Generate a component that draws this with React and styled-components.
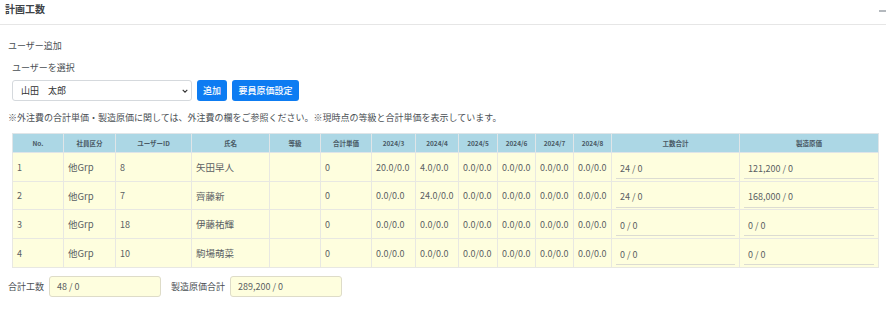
import React from "react";
import styled, { createGlobalStyle } from "styled-components";

const Global = createGlobalStyle`
  html, body { margin: 0; padding: 0; background: #fff; }
  body { font-family: "Noto Sans CJK JP", "Noto Sans", sans-serif; color: #495057; }
  * { box-sizing: border-box; }
`;

const Card = styled.div`
  width: 886px;
  height: 311px;
  background: #fff;
`;

const CardHeader = styled.div`
  display: flex;
  align-items: center;
  justify-content: space-between;
  height: 25px;
  padding: 0 0 0 5px;
  border-bottom: 1px solid #e6e6e6;
`;

const Title = styled.h3`
  margin: 0;
  font-size: 10px;
  font-weight: 700;
  color: #3d4246;
  line-height: 1;
  margin-top: -6px;
`;

const Collapse = styled.span`
  width: 7px;
  height: 2px;
  background: #b4b9be;
  margin-top: -2px;
`;

const Body = styled.div`
  padding: 14px 8px 0 8px;
`;

const Label = styled.div`
  font-size: 9px;
  line-height: 14px;
  color: #4a4f54;
  padding-left: ${(p) => p.$indent || 0}px;
  margin-bottom: ${(p) => p.$mb || 0}px;
`;

const Row = styled.div`
  display: flex;
  align-items: center;
  gap: 5px;
  padding-left: 4px;
`;

const Select = styled.div`
  width: 180px;
  height: 21px;
  border: 1px solid #d5d9dd;
  border-radius: 3px;
  display: flex;
  align-items: center;
  justify-content: space-between;
  padding: 0 3px 0 8px;
  font-size: 9px;
  color: #333;
  background: #fff;
`;

const Button = styled.button`
  height: 21px;
  padding: 0 ${(p) => p.$px || 5}px;
  border: none;
  border-radius: 3px;
  background: #0d7cf2;
  color: #fff;
  font-family: inherit;
  font-size: 9px;
  font-weight: 500;
  line-height: 1;
`;

const Note = styled.p`
  margin: 10px 0 0 0;
  font-size: 9px;
  line-height: 14px;
  color: #4a4f54;
`;

const TableWrap = styled.div`
  margin: 8px 0 0 4px;
`;

const Table = styled.table`
  width: 866px;
  table-layout: fixed;
  border-collapse: collapse;
  font-size: 9px;
`;

const Th = styled.th`
  background: #acd7e5;
  height: 19px;
  font-size: 6.5px;
  font-weight: 700;
  color: #4a5a66;
  text-align: center;
  border: 1px solid #dfe5e8;
  padding: 0;
`;

const Td = styled.td`
  background: #fefede;
  height: ${(p) => p.$h || 29}px;
  border: 1px solid #e8e8e2;
  padding: 0 4px;
  color: #5a5e63;
  font-size: ${(p) => (p.$big ? 9.5 : 9)}px;
  white-space: nowrap;
`;

const CellInput = styled.div`
  height: 21px;
  margin-top: 3px;
  display: flex;
  align-items: center;
  padding-left: 4px;
  border-bottom: 1px solid #dcdcd2;
  font-size: 9px;
  color: #5a5e63;
`;

const Summary = styled.div`
  display: flex;
  align-items: center;
  margin-top: 8px;
  font-size: 9px;
  color: #4a4f54;
`;

const SumLabel = styled.span`
  margin-right: 5px;
  margin-left: ${(p) => p.$ml || 0}px;
`;

const SumBox = styled.div`
  width: 112px;
  height: 21px;
  border: 1px solid #dedcc8;
  border-radius: 3px;
  background: #fefede;
  display: flex;
  align-items: center;
  padding-left: 7px;
  font-size: 9px;
  color: #5a5e63;
`;

const widths = [51, 52, 76, 78, 51, 51, 44, 43, 39, 38, 38, 38, 128, 139];
const headers = ["No.", "社員区分", "ユーザーID", "氏名", "等級", "合計単価", "2024/3", "2024/4", "2024/5", "2024/6", "2024/7", "2024/8", "工数合計", "製造原価"];

const rows = [
  { no: 1, id: 8, name: "矢田早人", m: ["20.0/0.0", "4.0/0.0", "0.0/0.0", "0.0/0.0", "0.0/0.0", "0.0/0.0"], t: "24 / 0", c: "121,200 / 0", h: 29 },
  { no: 2, id: 7, name: "齊藤新", m: ["0.0/0.0", "24.0/0.0", "0.0/0.0", "0.0/0.0", "0.0/0.0", "0.0/0.0"], t: "24 / 0", c: "168,000 / 0", h: 28 },
  { no: 3, id: 18, name: "伊藤祐輝", m: ["0.0/0.0", "0.0/0.0", "0.0/0.0", "0.0/0.0", "0.0/0.0", "0.0/0.0"], t: "0 / 0", c: "0 / 0", h: 29 },
  { no: 4, id: 10, name: "駒場萌菜", m: ["0.0/0.0", "0.0/0.0", "0.0/0.0", "0.0/0.0", "0.0/0.0", "0.0/0.0"], t: "0 / 0", c: "0 / 0", h: 29 },
];

const Chevron = () => (
  <svg width="6" height="4" viewBox="0 0 6 4">
    <path d="M0.7 0.8 L3 3.1 L5.3 0.8" fill="none" stroke="#333" strokeWidth="1.1" />
  </svg>
);

export default function App() {
  return (
    <Card>
      <Global />
      <CardHeader>
        <Title>計画工数</Title>
        <Collapse />
      </CardHeader>
      <Body>
        <Label $mb={8}>ユーザー追加</Label>
        <Label $indent={4} $mb={5}>ユーザーを選択</Label>
        <Row>
          <Select>
            <span>山田　太郎</span>
            <Chevron />
          </Select>
          <Button $px={6}>追加</Button>
          <Button $px={6.5}>要員原価設定</Button>
        </Row>
        <Note>※外注費の合計単価・製造原価に関しては、外注費の欄をご参照ください。※現時点の等級と合計単価を表示しています。</Note>
        <TableWrap>
          <Table>
            <colgroup>
              {widths.map((w, i) => (
                <col key={i} style={{ width: w }} />
              ))}
            </colgroup>
            <thead>
              <tr>
                {headers.map((h) => (
                  <Th key={h}>{h}</Th>
                ))}
              </tr>
            </thead>
            <tbody>
              {rows.map((r) => (
                <tr key={r.no}>
                  <Td $h={r.h}>{r.no}</Td>
                  <Td $h={r.h} $big>他Grp</Td>
                  <Td $h={r.h}>{r.id}</Td>
                  <Td $h={r.h} $big>{r.name}</Td>
                  <Td $h={r.h}></Td>
                  <Td $h={r.h}>0</Td>
                  {r.m.map((v, i) => (
                    <Td $h={r.h} key={i}>{v}</Td>
                  ))}
                  <Td $h={r.h}>
                    <CellInput>{r.t}</CellInput>
                  </Td>
                  <Td $h={r.h}>
                    <CellInput>{r.c}</CellInput>
                  </Td>
                </tr>
              ))}
            </tbody>
          </Table>
        </TableWrap>
        <Summary>
          <SumLabel>合計工数</SumLabel>
          <SumBox>48 / 0</SumBox>
          <SumLabel $ml={10}>製造原価合計</SumLabel>
          <SumBox>289,200 / 0</SumBox>
        </Summary>
      </Body>
    </Card>
  );
}
